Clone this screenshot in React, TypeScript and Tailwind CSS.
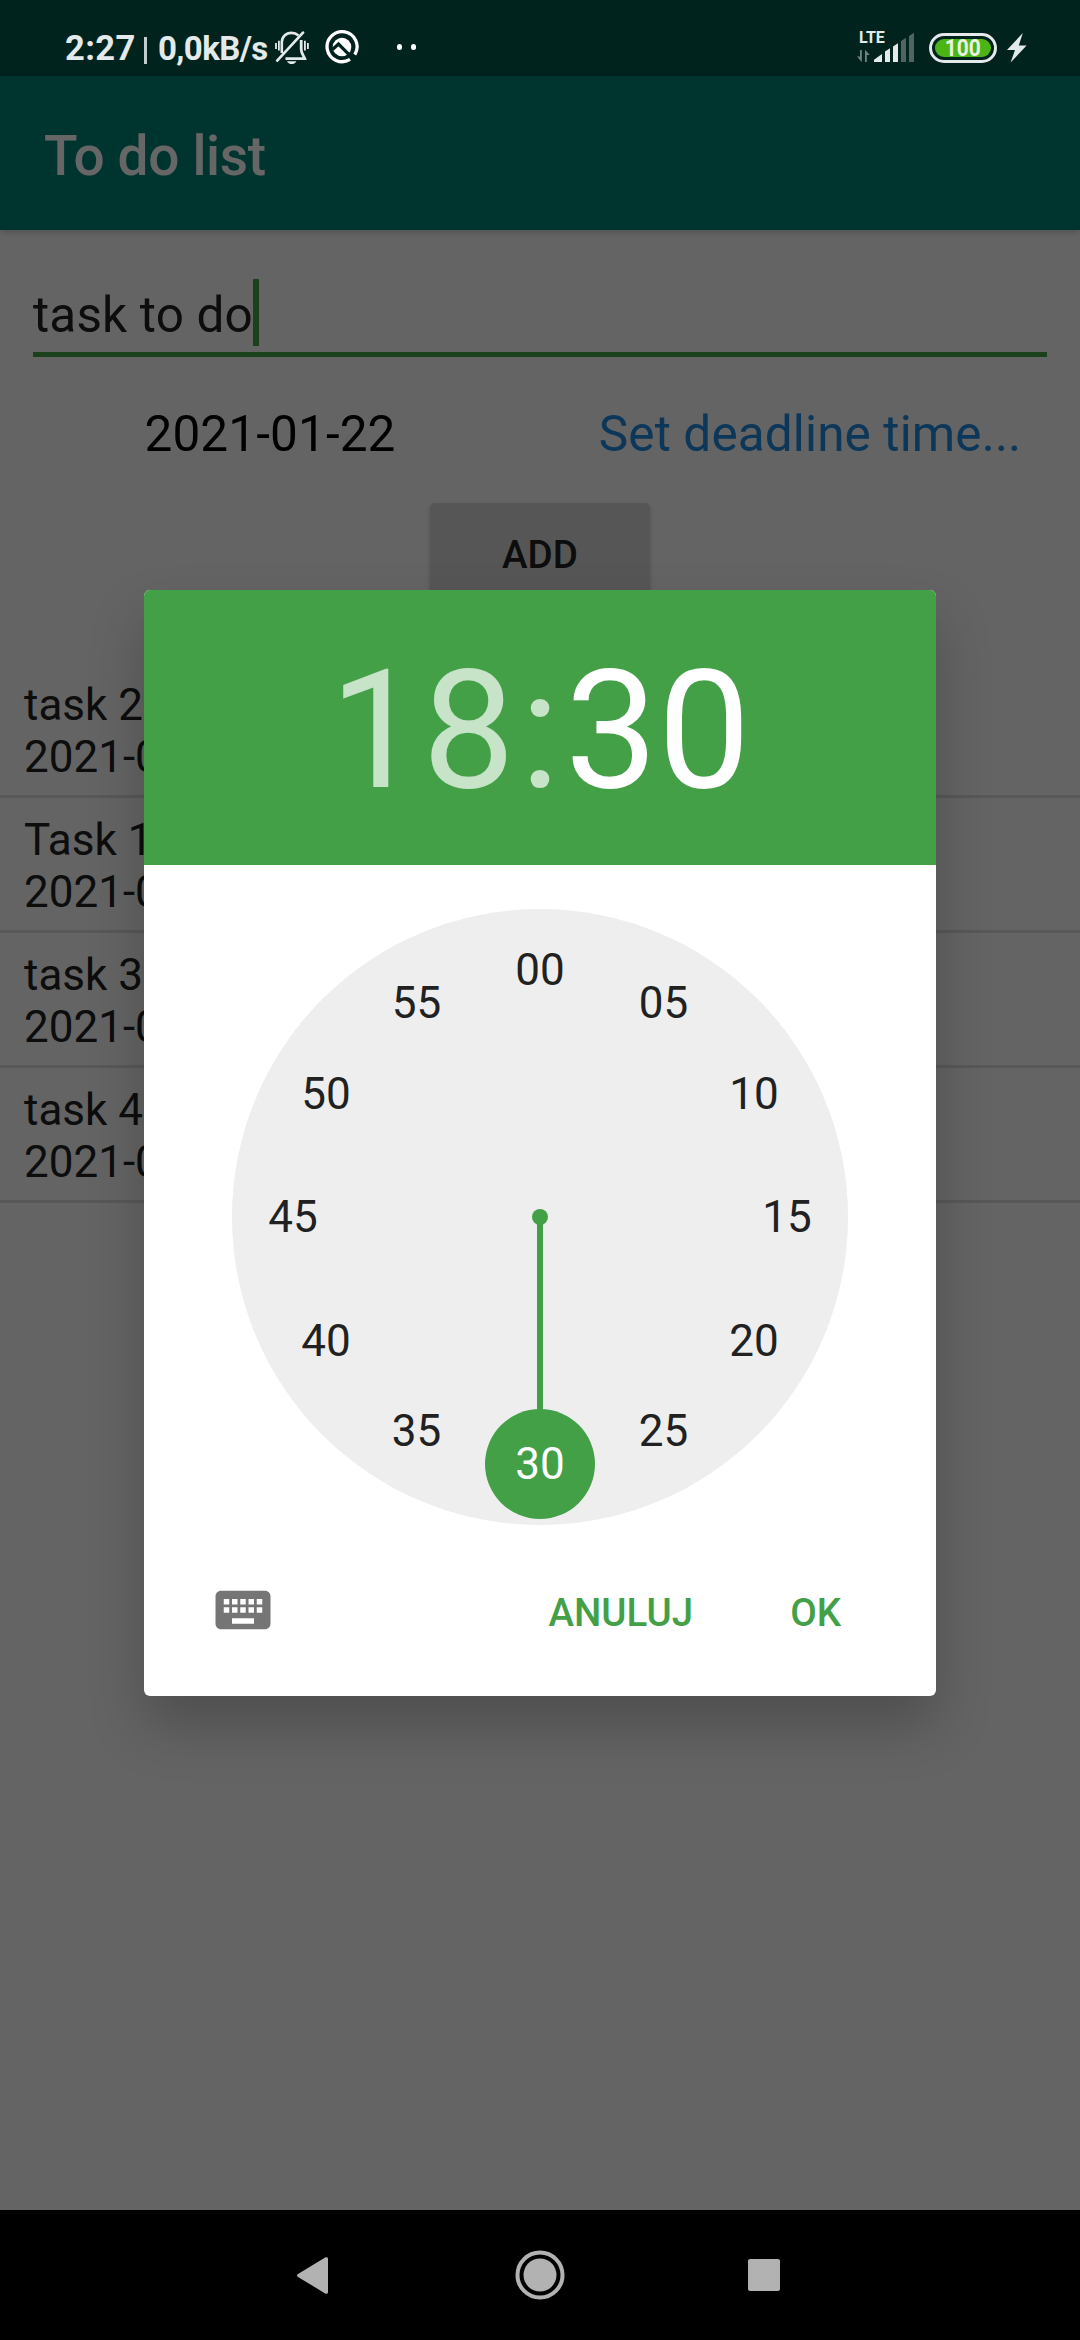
import React from "react";
import { MdKeyboard } from "react-icons/md";

const tasks = [
  { name: "task 2", date: "2021-01" },
  { name: "Task 1", date: "2021-01" },
  { name: "task 3", date: "2021-01" },
  { name: "task 4", date: "2021-01" },
];

const minutes = ["00", "05", "10", "15", "20", "25", "30", "35", "40", "45", "50", "55"];

function BellOffIcon() {
  return (
    <svg className="ml-[8px] mt-[31px] h-[34px] w-[34px]" viewBox="0 0 34 34" fill="none" stroke="#e3eae9">
      <path d="M6.8 22V11.5C6.8 5.5 11 1.9 16.5 1.9c3 0 5.2 1 7 2.6" strokeWidth="2.6" />
      <path d="M26.2 9v9.5c0 4 3 7.2 3.6 9.1H10.5" strokeWidth="2.8" />
      <path d="M2.2 29.6 28 1.6" strokeWidth="2.7" strokeLinecap="round" />
      <path d="M12 30.2h9.4c-.8 1.8-2.6 2.9-4.7 2.9s-3.9-1.1-4.7-2.9z" fill="#e3eae9" stroke="none" />
      <path d="M1 12v6M3.9 9.8v9.6M29.9 9.8v9.6M32.9 12v6" strokeWidth="1.8" />
    </svg>
  );
}

function QIcon() {
  return (
    <svg className="ml-[16px] mt-[30px] h-[34px] w-[34px]" viewBox="0 0 34 34" fill="none">
      <path d="M25 29.4A15 15 0 1 1 29.8 24.6" stroke="#fff" strokeWidth="3.3" />
      <circle cx="17" cy="17" r="9.3" fill="#fff" />
      <path d="M7.5 19.5 13.5 14l11.8 11.8" stroke="#00231e" strokeWidth="3.2" />
      <path d="M26 26.2l2.6 2.6" stroke="#00231e" strokeWidth="2.6" />
    </svg>
  );
}

function SignalIcon() {
  return (
    <svg className="h-[14px] w-[58px] overflow-visible" viewBox="0 0 58 14">
      <g fill="#6f8481">
        <path d="M3 2h1.8v12.2L0 8.6h3z" />
        <path d="M8 14V1.8L12.8 7H9.8v7z" />
      </g>
      <g fill="#e3eae9">
        <path d="M17 14v-2.2L25 6v8z" />
        <path d="M28 14V3.5L33 .3V14z" />
        <path d="M36 14V-1.5l5-3.2V14z" />
      </g>
      <g fill="#4e6562">
        <path d="M44 14V-7l5-3.2V14z" />
        <path d="M52 14v-26l5-3.2V14z" />
      </g>
    </svg>
  );
}

function StatusBar() {
  return (
    <div className="absolute inset-x-0 top-0 z-10 flex h-[76px] items-start justify-between pl-[65px] pr-[53px] text-[#e3eae9]">
      <div className="flex items-start">
        <span className="mt-[28px] w-[79px] text-[34.5px] font-bold leading-[40px] tracking-[0.4px]">2:27</span>
        <span className="mt-[37px] h-[27px] w-[3px] bg-[#c3cdcc]" />
        <span className="ml-[11px] mt-[29px] w-[109px] whitespace-nowrap text-[33px] font-bold leading-[40px] tracking-[-0.6px]">
          0,0kB/s
        </span>
        <BellOffIcon />
        <QIcon />
        <span className="ml-[38px] mt-[44px] h-[6px] w-[5px] rounded-full bg-white" />
        <span className="ml-[9px] mt-[44px] h-[6px] w-[5px] rounded-full bg-white" />
      </div>
      <div className="flex items-start">
        <div className="mt-[28px] flex w-[72px] flex-col">
          <span className="ml-[2px] text-[16px] font-bold leading-[20px]">LTE</span>
          <SignalIcon />
        </div>
        <div className="mt-[33px] h-[30px] w-[68px] rounded-full border-[3px] border-[#e3eae9] p-[3px]">
          <div className="flex h-full items-center justify-center rounded-full bg-[#4cb516] text-[24px] font-bold leading-[18px] text-[#e9f3e2]">
            <span className="scale-x-[0.87]">100</span>
          </div>
        </div>
        <svg className="ml-[10px] mt-[33px] h-[30px] w-[20px]" viewBox="0 0 20 30" fill="#e3eae9">
          <path d="M15.8 0 0 17h8L3.6 29.6 19.6 12.6h-7.8z" />
        </svg>
      </div>
    </div>
  );
}

function TodoScreen() {
  return (
    <div className="flex h-[2210px] flex-col bg-[#fafafa]">
      <div className="h-[76px] bg-[#00574b]" />
      <header className="flex h-[154px] items-center bg-[#008577] pl-[44px] pt-[6px] text-[55px] font-medium leading-[60px] tracking-[-0.35px] text-white shadow-[0_2px_7px_rgba(0,0,0,0.2)]">
        To do list
      </header>
      <div className="mx-[33px] mt-[49px] flex h-[78px] border-b-[5px] border-[#43a047]">
        <span className="text-[49.5px] leading-[72px] tracking-[0.15px] text-[#212121]">task to do</span>
        <span className="h-[67px] w-[6px] bg-[#43a047]" />
      </div>
      <div className="mt-[47px] grid grid-cols-2 text-center text-[49.5px] leading-[60px] tracking-[0.12px]">
        <span className="text-black">2021-01-22</span>
        <span className="text-[#2089dc]">Set deadline time...</span>
      </div>
      <button className="mx-auto mt-[39px] h-[99px] w-[220px] rounded-[5px] bg-[#d6d7d7] pt-[4px] text-[38.5px] font-medium text-[#212121] shadow-[0_2px_4px_rgba(0,0,0,0.2)]">
        ADD
      </button>
      <ul className="mt-[61px]">
        {tasks.map((t) => (
          <li
            key={t.name}
            className="flex h-[135px] flex-col border-b-[3px] border-[#dcdcdc] pl-[24px] pt-[16px] text-[44px] leading-[52px] text-[#212121]"
          >
            <span>{t.name}</span>
            <span>{t.date}</span>
          </li>
        ))}
      </ul>
    </div>
  );
}

function ClockFace() {
  return (
    <div className="relative mx-auto mt-[44px] h-[616px] w-[616px] shrink-0 rounded-full bg-[#eeeeee]">
      <span className="absolute left-[300px] top-[300px] h-4 w-4 rounded-full bg-[#43a047]" />
      <span className="absolute left-[305px] top-[308px] h-[200px] w-[6px] bg-[#43a047]" />
      <span className="absolute left-[253px] top-[500px] h-[110px] w-[110px] rounded-full bg-[#43a047]" />
      {minutes.map((m, i) => {
        const a = (i * Math.PI) / 6;
        return (
          <span
            key={m}
            className={
              m === "30"
                ? "absolute h-[60px] w-[80px] -translate-x-1/2 -translate-y-1/2 text-center text-[44px] leading-[60px] text-white"
                : "absolute h-[60px] w-[80px] -translate-x-1/2 -translate-y-1/2 text-center text-[44px] leading-[60px] text-[#212121]"
            }
            style={{ left: 308 + 247 * Math.sin(a), top: 308 - 247 * Math.cos(a) }}
          >
            {m}
          </span>
        );
      })}
    </div>
  );
}

function TimePicker() {
  return (
    <div className="flex h-[1106px] w-[792px] flex-col overflow-hidden rounded-[6px] bg-white shadow-[0_30px_55px_rgba(0,0,0,0.22)]">
      <div className="flex h-[275px] shrink-0 items-center justify-center bg-[#43a047] pt-[6px] text-[165px] leading-[190px] text-white">
        <span className="text-white/70">18</span>
        <span className="mx-[5px] text-white/70">:</span>
        <span>30</span>
      </div>
      <ClockFace />
      <div className="mt-[52px] flex h-[66px] items-center pl-[66px] pr-[95px] text-[38.5px] font-medium text-[#43a047]">
        <MdKeyboard className="h-[66px] w-[66px] text-[#757575]" />
        <span className="ml-auto pt-[5px]">ANULUJ</span>
        <span className="ml-[97px] pt-[5px]">OK</span>
      </div>
    </div>
  );
}

function NavBar() {
  return (
    <nav className="flex h-[130px] items-center bg-black pl-[297px]">
      <svg className="h-[37px] w-[31px]" viewBox="0 0 31 37" fill="#b2b2b2">
        <path d="M28.2.6C29.6-.3 31 .3 31 2v33c0 1.7-1.4 2.3-2.8 1.4L1 20c-1.3-.8-1.3-2.2 0-3z" />
      </svg>
      <svg className="ml-[187px] h-[50px] w-[50px]" viewBox="0 0 50 50">
        <circle cx="25" cy="25" r="22.5" fill="none" stroke="#b2b2b2" strokeWidth="4" />
        <circle cx="25" cy="25" r="16.5" fill="#b2b2b2" />
      </svg>
      <span className="ml-[183px] h-[32px] w-[32px] rounded-[2px] bg-[#b2b2b2]" />
    </nav>
  );
}

export default function App() {
  return (
    <div className="relative h-[2340px] w-[1080px] overflow-hidden font-['Roboto',sans-serif]">
      <TodoScreen />
      <NavBar />
      <div className="absolute inset-x-0 top-0 flex h-[2210px] items-start justify-center bg-black/60 pt-[590px]">
        <TimePicker />
      </div>
      <StatusBar />
    </div>
  );
}
